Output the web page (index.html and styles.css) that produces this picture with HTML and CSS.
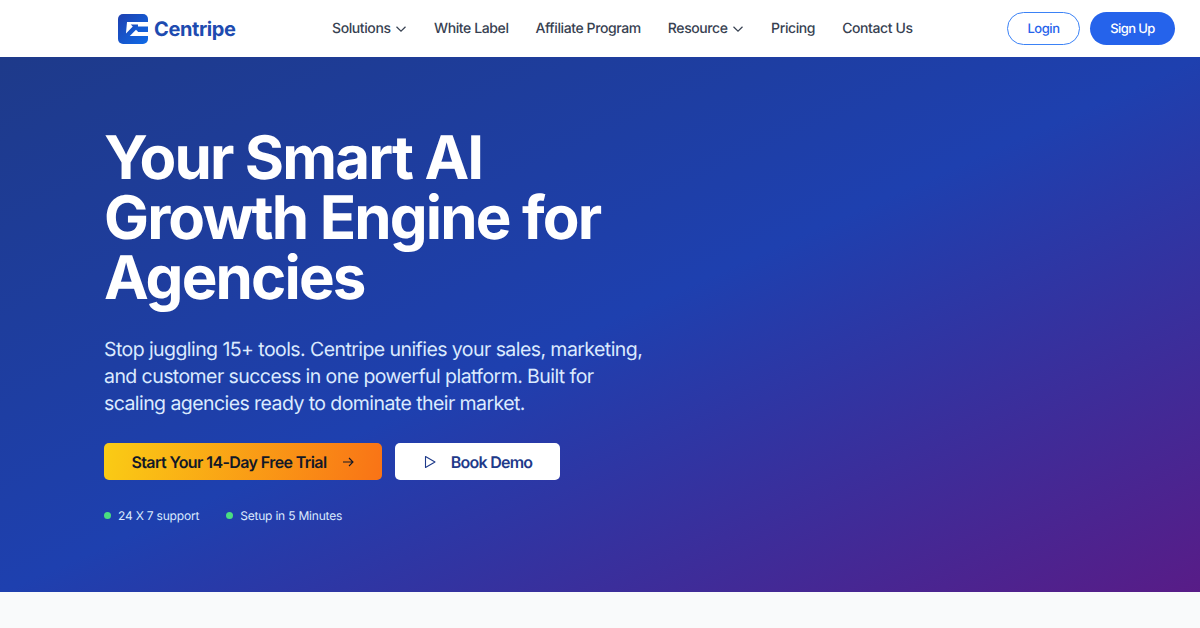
FILE: index.html
```html
<!DOCTYPE html>
<html lang="en">
<head>
    <meta charset="UTF-8">
    <meta name="viewport" content="width=device-width, initial-scale=1.0">
    <title>Centripe</title>
    <link rel="stylesheet" href="styles.css">
</head>
<body>
    <header class="topbar">
        <a class="logo" href="#">
            <svg class="logo-mark" width="30" height="30" viewBox="0 0 30 30" aria-hidden="true">
                <defs>
                    <linearGradient id="logoGrad" x1="0" y1="0" x2="1" y2="1">
                        <stop offset="0" stop-color="#1e40af"/>
                        <stop offset="1" stop-color="#0f6be8"/>
                    </linearGradient>
                </defs>
                <rect width="30" height="30" rx="5" fill="url(#logoGrad)"/>
                <path fill="#fff" d="M9 8H30V12.5H20V18H30V22H8V19Z"/>
                <path fill="url(#logoGrad)" d="M11.8 22L18 15.8 20 17.8V10.5H12.7L14.8 12.6 8 19.4V22Z"/>
            </svg>
            <span class="logo-text">Centripe</span>
        </a>
        <nav class="nav">
            <a href="#">Solutions
                <svg width="12" height="12" viewBox="0 0 12 12" aria-hidden="true"><path d="M1.5 3.8L6 8.2l4.5-4.4" fill="none" stroke="currentColor" stroke-width="1.2"/></svg>
            </a>
            <a href="#">White Label</a>
            <a href="#">Affiliate Program</a>
            <a href="#">Resource
                <svg width="12" height="12" viewBox="0 0 12 12" aria-hidden="true"><path d="M1.5 3.8L6 8.2l4.5-4.4" fill="none" stroke="currentColor" stroke-width="1.2"/></svg>
            </a>
            <a href="#">Pricing</a>
            <a href="#">Contact Us</a>
        </nav>
        <div class="auth">
            <a class="btn-login" href="#">Login</a>
            <a class="btn-signup" href="#">Sign Up</a>
        </div>
    </header>

    <section class="hero">
        <h1>Your Smart AI<br>Growth Engine for<br>Agencies</h1>
        <p class="lead">Stop juggling 15+ tools. Centripe unifies your sales, marketing, and customer success in one powerful platform. Built for scaling agencies ready to dominate their market.</p>
        <div class="cta-row">
            <a class="btn-trial" href="#">Start Your 14-Day Free Trial
                <svg width="14" height="14" viewBox="0 0 14 14" aria-hidden="true"><path d="M2 7h10M8 3l4 4-4 4" fill="none" stroke="currentColor" stroke-width="1.1"/></svg>
            </a>
            <a class="btn-demo" href="#">
                <svg width="14" height="14" viewBox="0 0 14 14" aria-hidden="true"><path d="M2.5 1.6L12 7l-9.5 5.4Z" fill="none" stroke="currentColor" stroke-width="1.1" stroke-linejoin="round"/></svg>
                Book Demo
            </a>
        </div>
        <ul class="perks">
            <li>24 X 7 support</li>
            <li>Setup in 5 Minutes</li>
        </ul>
    </section>

    <div class="next-section"></div>
</body>
</html>
```

FILE: styles.css
```css
html, body {
    margin: 0;
    height: 100%;
    overflow: hidden;
}
body {
    font-family: "Inter", "Liberation Sans", sans-serif;
    background-color: #f9fafb;
    text-rendering: geometricPrecision;
}
a {
    text-decoration: none;
    color: inherit;
}
.topbar {
    display: flex;
    align-items: center;
    height: 57px;
    box-sizing: border-box;
    padding: 0 25px 0 118px;
    background-color: #fff;
}
.logo {
    display: flex;
    align-items: center;
    gap: 6px;
    width: 214px;
}
.logo-text {
    font-size: 20px;
    font-weight: 700;
    letter-spacing: -0.4px;
    color: #1e4bb0;
}
.nav {
    display: flex;
    align-items: center;
    gap: 27px;
    font-size: 14px;
    font-weight: 500;
    letter-spacing: -0.4px;
    color: #374151;
}
.nav a {
    display: flex;
    align-items: center;
    gap: 4.5px;
}
.auth {
    display: flex;
    gap: 10px;
    margin-left: auto;
}
.btn-login, .btn-signup {
    display: flex;
    align-items: center;
    justify-content: center;
    height: 33px;
    box-sizing: border-box;
    border-radius: 17px;
    font-size: 13px;
    font-weight: 500;
    letter-spacing: -0.45px;
}
.btn-login {
    width: 73px;
    border: 1px solid #3b82f6;
    color: #2563eb;
}
.btn-signup {
    width: 85px;
    letter-spacing: -0.6px;
    background-color: #2563eb;
    color: #fff;
}
.hero {
    height: 535px;
    box-sizing: border-box;
    padding: 71px 0 0 104px;
    background: linear-gradient(to bottom right, #1e3a8a 0%, #1e40af 50%, #581c87 100%);
    color: #fff;
}
.hero h1 {
    margin: 0;
    font-size: 60px;
    line-height: 60px;
    font-weight: 700;
    letter-spacing: -1.85px;
}
.lead {
    width: 550px;
    margin: 28px 0 0;
    font-size: 19.5px;
    line-height: 27px;
    letter-spacing: -0.57px;
    color: #dbeafe;
}
.cta-row {
    display: flex;
    gap: 13px;
    margin-top: 26px;
}
.btn-trial, .btn-demo {
    display: flex;
    align-items: center;
    justify-content: center;
    height: 37px;
    box-sizing: border-box;
    border-radius: 5px;
    font-size: 16px;
    font-weight: 600;
    letter-spacing: -0.6px;
}
.btn-trial {
    width: 278px;
    gap: 14px;
    background: linear-gradient(100deg, #facc15, #f97316);
    color: #111827;
}
.btn-demo {
    width: 165px;
    gap: 14px;
    letter-spacing: -0.75px;
    background-color: #fff;
    color: #1e3a8a;
}
.perks {
    display: flex;
    gap: 27px;
    margin: 28px 0 0;
    padding: 0;
    list-style: none;
    font-size: 12px;
    letter-spacing: -0.2px;
    color: #dbeafe;
}
.perks li {
    display: flex;
    align-items: center;
    gap: 7px;
}
.perks li::before {
    content: "";
    width: 7px;
    height: 7px;
    border-radius: 50%;
    background-color: #4ade80;
}
.next-section {
    height: 36px;
    background-color: #f9fafb;
}
```
